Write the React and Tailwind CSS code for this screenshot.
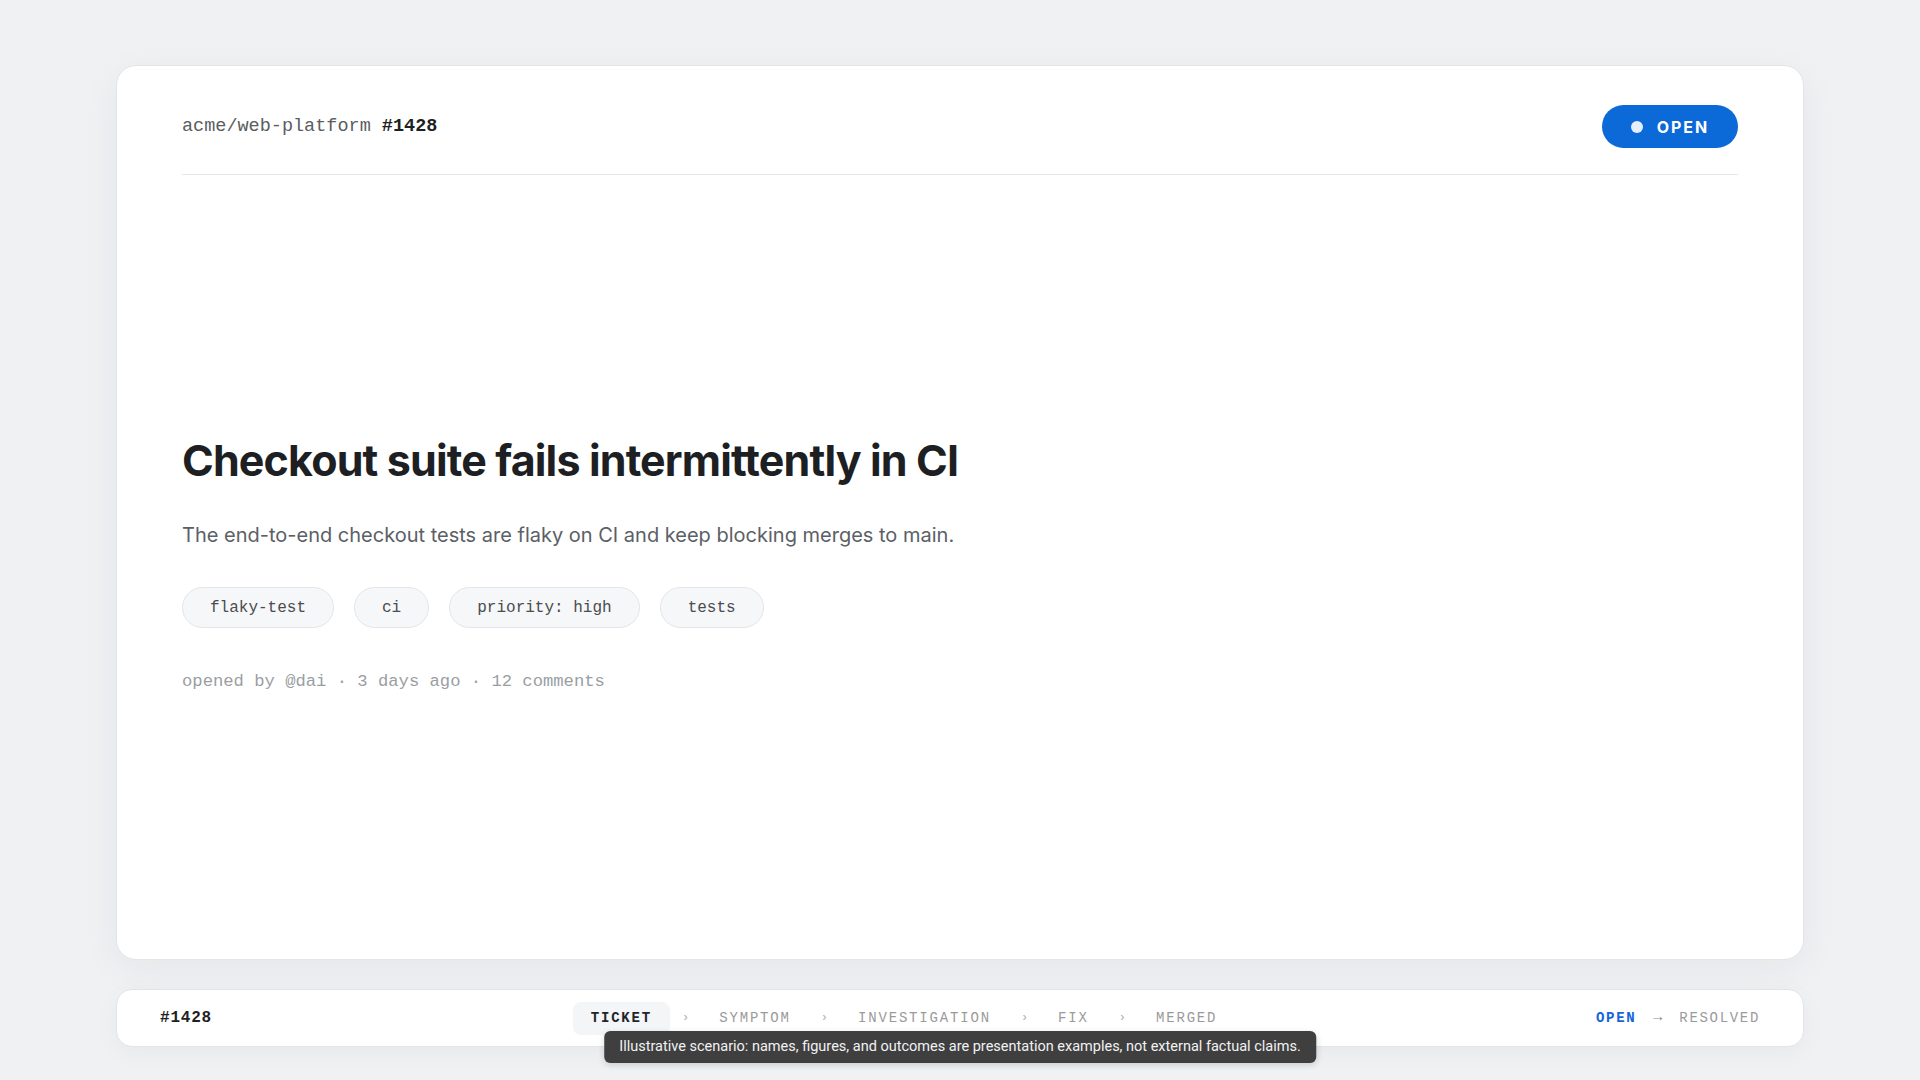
import React from "react";

export default function App() {
  const steps = ["TICKET", "SYMPTOM", "INVESTIGATION", "FIX", "MERGED"];
  const tags = ["flaky-test", "ci", "priority: high", "tests"];
  return (
    <div className="relative h-screen w-full bg-[#f0f1f3] flex flex-col px-[116px] pt-[65px] pb-[33px] gap-[29px] font-['Inter',sans-serif]">
      <div className="flex-1 flex flex-col bg-white border border-[#e2e4e7] rounded-[20px] shadow-[0_10px_40px_rgba(20,30,50,0.05)]">
        <div className="mx-[65px] pt-[39px] pb-[26px] border-b border-[#e6e7e9] flex items-center justify-between">
          <div className="font-['Liberation_Mono',monospace] text-[18.5px] text-[#5a5d61]">
            acme/web-platform <span className="font-bold text-[#1d1f23]">#1428</span>
          </div>
          <div className="h-[43px] flex items-center gap-[14px] pl-[29px] pr-[29px] rounded-full bg-[#0b69d8]">
            <span className="w-[12px] h-[12px] rounded-full bg-[#e6efff]" />
            <span className="text-white font-bold text-[16px] tracking-[0.12em]">OPEN</span>
          </div>
        </div>
        <div className="flex-1 flex flex-col justify-center px-[65px] pb-[4px]">
          <h1 className="text-[43px] leading-[51px] font-bold tracking-[-0.02em] text-[#1d1f23]">
            Checkout suite fails intermittently in CI
          </h1>
          <p className="mt-[34px] text-[20px] leading-[30px] text-[#5b6066]">
            The end-to-end checkout tests are flaky on CI and keep blocking merges to main.
          </p>
          <div className="mt-[37px] flex gap-[20px]">
            {tags.map((t) => (
              <span
                key={t}
                className="h-[41px] flex items-center px-[27px] rounded-full border border-[#e3e5e8] bg-[#f6f7f8] font-['Liberation_Mono',monospace] text-[16px] text-[#4a4c50] whitespace-pre"
              >
                {t}
              </span>
            ))}
          </div>
          <div className="mt-[41px] font-['Liberation_Mono',monospace] text-[17.2px] leading-[25.5px] text-[#9a9ea3] whitespace-pre">
            opened by @dai · 3 days ago · 12 comments
          </div>
        </div>
      </div>
      <div className="h-[58px] flex items-center justify-between px-[43px] bg-white border border-[#e2e4e7] rounded-[16px] shadow-[0_6px_24px_rgba(20,30,50,0.04)] font-['Liberation_Mono',monospace]">
        <span className="text-[16px] font-bold tracking-[0.05em] text-[#1d1f23]">#1428</span>
        <div className="flex items-center gap-[12px]">
          {steps.map((s, i) => (
            <React.Fragment key={s}>
              {i > 0 && <span className="text-[12px] text-[#a9acb0]">›</span>}
              <span
                className={
                  i === 0
                    ? "h-[33px] flex items-center px-[18px] rounded-[8px] bg-[#f4f5f7] text-[14px] font-bold tracking-[0.13em] text-[#222428]"
                    : "h-[33px] flex items-center px-[18px] text-[14px] tracking-[0.13em] text-[#9a9a9a]"
                }
              >
                {s}
              </span>
            </React.Fragment>
          ))}
        </div>
        <div className="flex items-center gap-[17px] text-[14px] tracking-[0.12em]">
          <span className="font-bold text-[#1565d8]">OPEN</span>
          <span className="text-[#8a8d91] tracking-normal text-[15px]">→</span>
          <span className="text-[#9a9a9a]">RESOLVED</span>
        </div>
      </div>
      <div className="absolute left-1/2 -translate-x-1/2 bottom-[17px] h-[32px] px-[15px] flex items-center rounded-[6px] bg-[#3f3f40] text-[#f2f2f2] text-[14.5px] font-['Roboto',sans-serif] whitespace-nowrap shadow-[0_2px_6px_rgba(0,0,0,0.15)]">
        Illustrative scenario: names, figures, and outcomes are presentation examples, not external factual claims.
      </div>
    </div>
  );
}
